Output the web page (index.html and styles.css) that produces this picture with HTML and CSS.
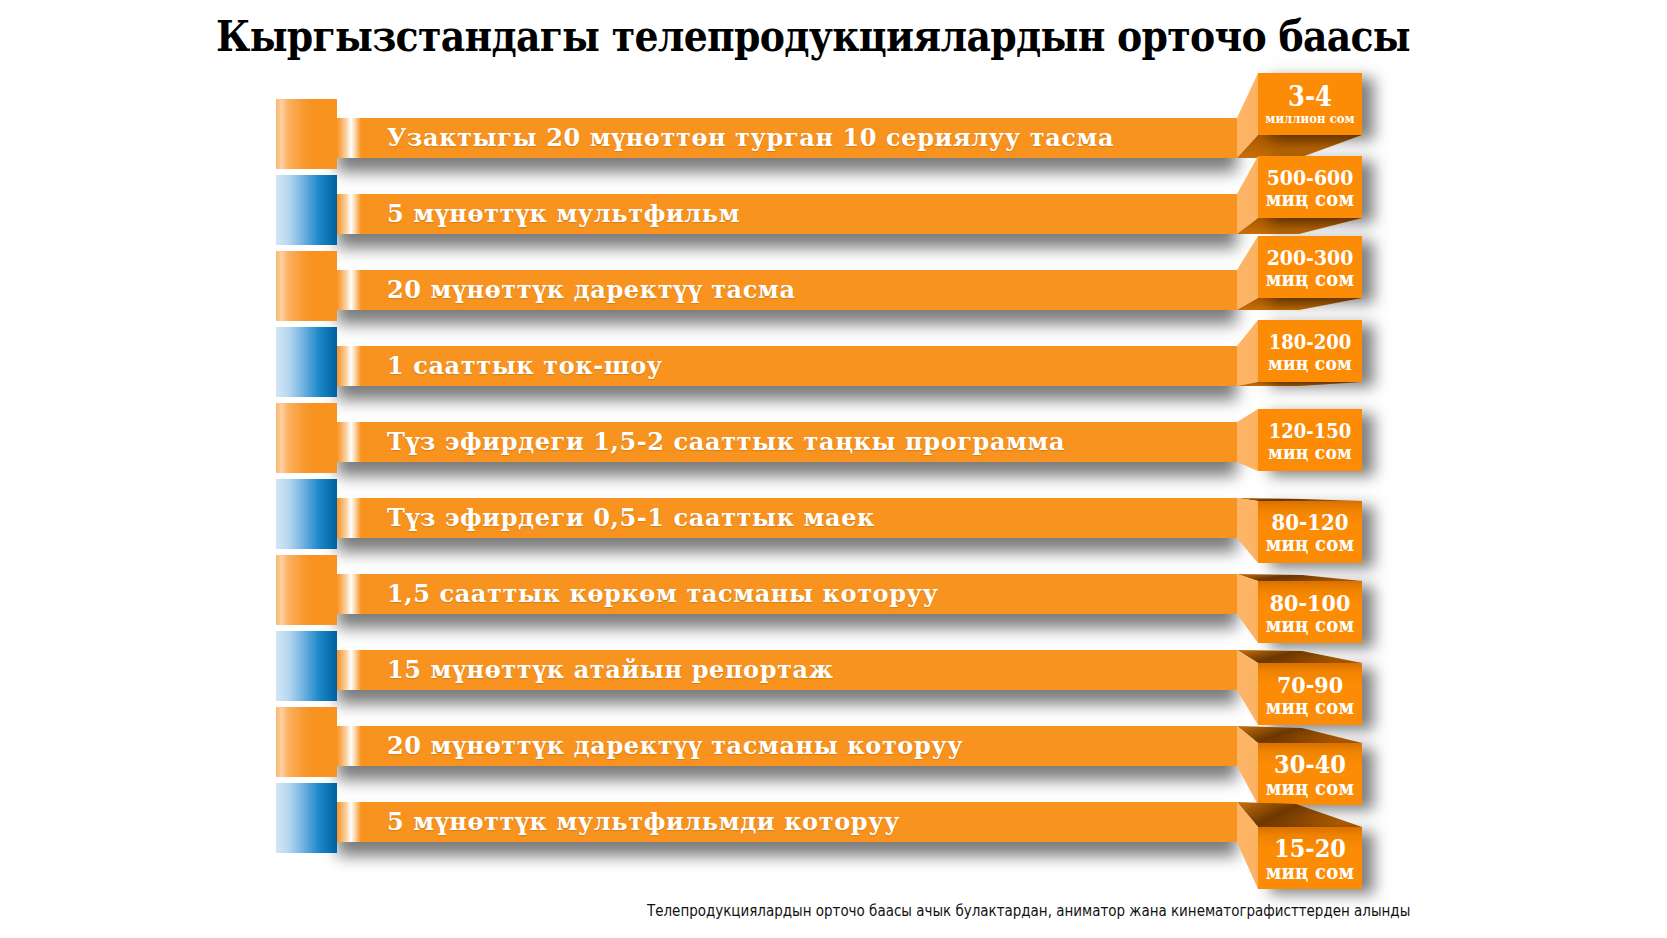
FILE: index.html
```html
<!DOCTYPE html>
<html lang="ky">
<head>
<meta charset="utf-8">
<title>Кыргызстандагы телепродукциялардын орточо баасы</title>
<link rel="stylesheet" href="styles.css">
</head>
<body>
<div class="page">
  <svg class="defs" width="0" height="0" aria-hidden="true">
    <defs>
      <linearGradient id="topg" x1="0" y1="0" x2="1" y2="0.4">
        <stop offset="0" stop-color="#c8730c"/>
        <stop offset="0.45" stop-color="#6e3800"/>
        <stop offset="1" stop-color="#b55e00"/>
      </linearGradient>
      <linearGradient id="botg" x1="0" y1="1" x2="0" y2="0">
        <stop offset="0" stop-color="#c87008"/>
        <stop offset="1" stop-color="#a85800"/>
      </linearGradient>
    </defs>
  </svg>
  <h1 class="title">Кыргызстандагы телепродукциялардын орточо баасы</h1>
  <div class="list">
    <div class="row orange" style="--dy:-45px">
      <div class="block"></div>
      <div class="bar"><span>Узактыгы 20 мүнөттөн турган 10 сериялуу тасма</span></div>
      <div class="cap">
        <svg class="faces" viewBox="0 -60 125 200" width="125" height="200"><polygon class="side" points="0,0 21,-45 21,17 0,40"/><polygon class="bottom" points="0,40 21,17 125,17 62,40"/></svg>
        <div class="face"><b class="big">3-4</b><small class="tiny">миллион сом</small></div>
      </div>
    </div>
    <div class="row blue" style="--dy:-38px">
      <div class="block"></div>
      <div class="bar"><span>5 мүнөттүк мультфильм</span></div>
      <div class="cap">
        <svg class="faces" viewBox="0 -60 125 200" width="125" height="200"><polygon class="side" points="0,0 21,-38 21,24 0,40"/><polygon class="bottom" points="0,40 21,24 125,24 62,40"/></svg>
        <div class="face"><b>500-600</b><small>миң сом</small></div>
      </div>
    </div>
    <div class="row orange" style="--dy:-34px">
      <div class="block"></div>
      <div class="bar"><span>20 мүнөттүк даректүү тасма</span></div>
      <div class="cap">
        <svg class="faces" viewBox="0 -60 125 200" width="125" height="200"><polygon class="side" points="0,0 21,-34 21,28 0,40"/><polygon class="bottom" points="0,40 21,28 125,28 62,40"/></svg>
        <div class="face"><b>200-300</b><small>миң сом</small></div>
      </div>
    </div>
    <div class="row blue" style="--dy:-26px">
      <div class="block"></div>
      <div class="bar"><span>1 сааттык ток-шоу</span></div>
      <div class="cap">
        <svg class="faces" viewBox="0 -60 125 200" width="125" height="200"><polygon class="side" points="0,0 21,-26 21,36 0,40"/><polygon class="bottom" points="0,40 21,36 125,36 62,40"/></svg>
        <div class="face"><b class="sm">180-200</b><small class="sm">миң сом</small></div>
      </div>
    </div>
    <div class="row orange" style="--dy:-13px">
      <div class="block"></div>
      <div class="bar"><span>Түз эфирдеги 1,5-2 сааттык таңкы программа</span></div>
      <div class="cap">
        <svg class="faces" viewBox="0 -60 125 200" width="125" height="200"><polygon class="side" points="0,0 21,-13 21,49 0,40"/></svg>
        <div class="face"><b class="sm">120-150</b><small class="sm">миң сом</small></div>
      </div>
    </div>
    <div class="row blue" style="--dy:3px">
      <div class="block"></div>
      <div class="bar"><span>Түз эфирдеги 0,5-1 сааттык маек</span></div>
      <div class="cap">
        <svg class="faces" viewBox="0 -60 125 200" width="125" height="200"><polygon class="top" points="0,0 65,1 125,3 21,3"/><polygon class="side" points="0,0 21,3 21,65 0,40"/></svg>
        <div class="face shade"><b class="md">80-120</b><small>миң сом</small></div>
      </div>
    </div>
    <div class="row orange" style="--dy:7px">
      <div class="block"></div>
      <div class="bar"><span>1,5 сааттык көркөм тасманы которуу</span></div>
      <div class="cap">
        <svg class="faces" viewBox="0 -60 125 200" width="125" height="200"><polygon class="top" points="0,0 65,1 125,7 21,7"/><polygon class="side" points="0,0 21,7 21,69 0,40"/></svg>
        <div class="face shade"><b class="lg">80-100</b><small>миң сом</small></div>
      </div>
    </div>
    <div class="row blue" style="--dy:13px">
      <div class="block"></div>
      <div class="bar"><span>15 мүнөттүк атайын репортаж</span></div>
      <div class="cap">
        <svg class="faces" viewBox="0 -60 125 200" width="125" height="200"><polygon class="top" points="0,0 65,1 125,13 21,13"/><polygon class="side" points="0,0 21,13 21,75 0,40"/></svg>
        <div class="face shade"><b class="lg">70-90</b><small>миң сом</small></div>
      </div>
    </div>
    <div class="row orange" style="--dy:17px">
      <div class="block"></div>
      <div class="bar"><span>20 мүнөттүк даректүү тасманы которуу</span></div>
      <div class="cap">
        <svg class="faces" viewBox="0 -60 125 200" width="125" height="200"><polygon class="top" points="0,0 65,2 125,17 21,17"/><polygon class="side" points="0,0 21,17 21,79 0,40"/></svg>
        <div class="face shade"><b class="xl">30-40</b><small>миң сом</small></div>
      </div>
    </div>
    <div class="row blue" style="--dy:25px">
      <div class="block"></div>
      <div class="bar"><span>5 мүнөттүк мультфильмди которуу</span></div>
      <div class="cap">
        <svg class="faces" viewBox="0 -60 125 200" width="125" height="200"><polygon class="top" points="0,0 59,2 125,25 21,25"/><polygon class="side" points="0,0 21,25 21,87 0,40"/></svg>
        <div class="face shade"><b class="xl">15-20</b><small>миң сом</small></div>
      </div>
    </div>
  </div>
  <p class="note">Телепродукциялардын орточо баасы ачык булактардан, аниматор жана кинематографисттерден алынды</p>
</div>
</body>
</html>
```
FILE: styles.css
```css
html, body {
  margin: 0;
  padding: 0;
  background: #ffffff;
}
.page {
  width: 1667px;
  height: 938px;
  overflow: hidden;
  position: relative;
}
.defs {
  position: absolute;
  width: 0;
  height: 0;
  overflow: hidden;
}
.title {
  margin: 0;
  height: 74px;
  line-height: 74px;
  padding-left: 216px;
  font-family: "DejaVu Serif Condensed", "DejaVu Serif", serif;
  font-stretch: condensed;
  font-weight: bold;
  font-size: 42px;
  letter-spacing: -0.7px;
  color: #000;
  white-space: nowrap;
}
.list {
  margin-top: 25px;
  margin-left: 276px;
  display: flex;
  flex-direction: column;
  gap: 6px;
}
.row {
  display: flex;
  align-items: flex-start;
  height: 70px;
  position: relative;
}
.block {
  width: 61px;
  height: 70px;
  flex: none;
  position: relative;
  z-index: 2;
}
.orange .block {
  background: linear-gradient(90deg, #f9b56e 0%, #fdd1a2 9%, #fbb060 20%, #f89a30 45%, #f7931e 60%, #f7931e 100%);
}
.blue .block {
  background: linear-gradient(90deg, #d2e5f6 0%, #b9d8f1 20%, #6fb1e0 45%, #1a86c8 72%, #005f9f 100%);
}
.bar {
  width: 900px;
  height: 40px;
  margin-top: 19px;
  flex: none;
  background: linear-gradient(90deg, #f7931e 0px, #fcd0a0 9px, #ffffff 14px, #fde3c6 17px, #f7931e 24px, #f7931e 100%);
  box-shadow: 0 14px 16px rgba(0, 0, 0, 0.52);
  display: flex;
  align-items: center;
  padding-left: 50px;
  box-sizing: border-box;
  position: relative;
  z-index: 1;
}
.bar span {
  font-family: "DejaVu Serif", serif;
  font-weight: bold;
  font-size: 24px;
  letter-spacing: 0.6px;
  color: #ffffff;
  white-space: nowrap;
  line-height: 40px;
  text-shadow: 0 1px 1px rgba(120, 60, 0, 0.25);
}
.cap {
  width: 125px;
  height: 40px;
  margin-top: 19px;
  flex: none;
  position: relative;
  z-index: 3;
}
.faces {
  position: absolute;
  left: 0;
  top: -60px;
  overflow: visible;
}
.side { fill: #fdb565; }
.bottom { fill: url(#botg); }
.top { fill: url(#topg); }
.face {
  position: absolute;
  left: 21px;
  top: var(--dy);
  width: 104px;
  height: 62px;
  background: #fc8b05;
  box-shadow: 12px 5px 14px rgba(0, 0, 0, 0.5);
  display: flex;
  flex-direction: column;
  align-items: center;
  justify-content: center;
  padding-top: 2px;
  box-sizing: border-box;
  color: #ffffff;
  font-family: "DejaVu Serif Condensed", "DejaVu Serif", serif;
  font-stretch: condensed;
  font-weight: bold;
}
.face.shade {
  background: linear-gradient(180deg, #d97000 0px, #f08400 9px, #fc8b05 22px, #fc8b05 100%);
}
.face b {
  font-size: 21px;
  line-height: 22px;
}
.face small {
  font-size: 20px;
  line-height: 21px;
  letter-spacing: 0.2px;
}
.face b.big {
  font-size: 27px;
  line-height: 28px;
}
.face small.tiny {
  font-size: 13px;
  line-height: 16px;
  letter-spacing: 0;
}
.face b.sm { font-size: 20px; }
.face small.sm { font-size: 19px; }
.face b.md { font-size: 22px; line-height: 23px; }
.face b.lg { font-size: 23px; line-height: 24px; }
.face b.xl { font-size: 25px; line-height: 26px; }
.note {
  margin: 48px 0 0 647px;
  font-family: "DejaVu Sans Condensed", "DejaVu Sans", sans-serif;
  font-stretch: condensed;
  font-size: 16px;
  line-height: 20px;
  color: #111;
  white-space: nowrap;
  transform: scaleX(0.935);
  transform-origin: left center;
}
```
